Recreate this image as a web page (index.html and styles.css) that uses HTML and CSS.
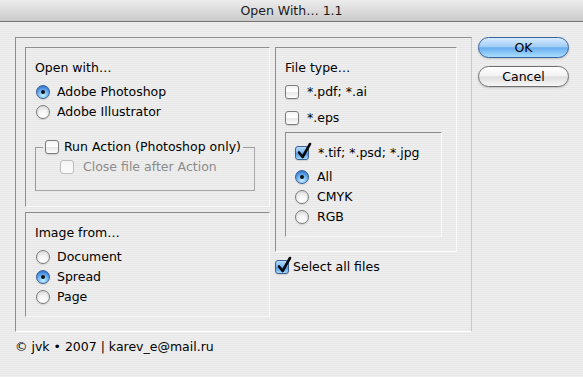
FILE: index.html
```html
<!DOCTYPE html>
<html>
<head>
<meta charset="utf-8">
<title>Open With… 1.1</title>
<link rel="stylesheet" href="styles.css">
</head>
<body>
<div class="titlebar">Open With… 1.1</div>
<div class="main">
  <div class="frame">
    <div class="col-left">
      <div class="box box-open">
        <div class="label">Open with…</div>
        <div class="opt opt-left"><span class="radio on"></span>Adobe Photoshop</div>
        <div class="opt opt-left"><span class="radio"></span>Adobe Illustrator</div>
        <fieldset class="action">
          <legend class="action-legend"><span class="check check-legend"></span>Run Action (Photoshop only)</legend>
          <div class="opt opt-close disabled"><span class="check dis"></span>Close file after Action</div>
        </fieldset>
      </div>
      <div class="box box-image">
        <div class="label">Image from…</div>
        <div class="opt opt-left"><span class="radio"></span>Document</div>
        <div class="opt opt-left"><span class="radio on"></span>Spread</div>
        <div class="opt opt-left"><span class="radio"></span>Page</div>
      </div>
    </div>
    <div class="col-right">
      <div class="box box-file">
        <div class="label">File type…</div>
        <div class="opt opt-file"><span class="check"></span>*.pdf; *.ai</div>
        <div class="opt opt-file opt-eps"><span class="check"></span>*.eps</div>
        <div class="subbox">
          <div class="opt opt-sub"><span class="check on"><svg class="tick" viewBox="0 0 16 18"><path d="M3 10.5 L6.6 15 L14 2" /></svg></span>*.tif; *.psd; *.jpg</div>
          <div class="opt opt-sub opt-first"><span class="radio on"></span>All</div>
          <div class="opt opt-sub"><span class="radio"></span>CMYK</div>
          <div class="opt opt-sub"><span class="radio"></span>RGB</div>
        </div>
      </div>
      <div class="opt opt-all"><span class="check on"><svg class="tick" viewBox="0 0 16 18"><path d="M3 10.5 L6.6 15 L14 2" /></svg></span>Select all files</div>
    </div>
  </div>
  <div class="buttons">
    <div class="btn btn-default">OK</div>
    <div class="btn">Cancel</div>
  </div>
</div>
<div class="footer">© jvk • 2007 | karev_e@mail.ru</div>
</body>
</html>
```
FILE: styles.css
```css
html, body {
  margin: 0;
  padding: 0;
}
body {
  width: 583px;
  height: 377px;
  overflow: hidden;
  font-family: "DejaVu Sans", "Liberation Sans", sans-serif;
  font-size: 12.5px;
  color: #000;
  background: repeating-linear-gradient(to bottom, #efefef 0, #efefef 1px, #e7e7e7 1px, #e7e7e7 2px);
}
.titlebar {
  height: 21px;
  line-height: 22px;
  text-align: center;
  color: #1a1a1a;
  background: linear-gradient(to bottom, #ececec 0%, #dcdcdc 50%, #cbcbcb 100%);
  border-bottom: 1px solid #727272;
}
.main {
  display: flex;
  align-items: flex-start;
  padding: 15px 0 0 15px;
}
.frame {
  display: flex;
  gap: 5px;
  box-sizing: border-box;
  width: 457px;
  height: 295px;
  padding: 9px 14px 14px 9px;
  border-top: 1px solid #8e8e8e;
  border-left: 1px solid #8e8e8e;
  border-right: 1px solid #c8c8c8;
  border-bottom: 1px solid #fdfdfd;
}
.col-left {
  display: flex;
  flex-direction: column;
  gap: 5px;
  width: 245px;
}
.col-right {
  display: flex;
  flex-direction: column;
  width: 182px;
}
.box {
  box-sizing: border-box;
  padding: 10px 0 0 9px;
  border-top: 1px solid #8e8e8e;
  border-left: 1px solid #8e8e8e;
  border-right: 1px solid #fbfbfb;
  border-bottom: 1px solid #fbfbfb;
}
.box-open { height: 160px; }
.box-image { height: 105px; }
.box-file { height: 205px; }
.label {
  height: 20px;
  line-height: 20px;
  margin-bottom: 4px;
}
.opt {
  display: flex;
  align-items: center;
  height: 20px;
  line-height: 20px;
  white-space: nowrap;
}
.opt-left .radio { margin: 0 7px 0 1px; }
.opt-file .check { margin-right: 8px; }
.opt-eps { margin-top: 6px; }
.opt-sub .check { margin-right: 9px; }
.opt-sub .radio { margin-right: 8px; }
.opt-first { margin-top: 4px; }
.opt-all { margin-top: 5px; }
.opt-all .check { margin-right: 4px; }

.action {
  margin: 15px 0 0 0;
  width: 220px;
  box-sizing: border-box;
  padding: 0 0 13px 7px;
  border: 1px solid #9a9a9a;
  border-right-color: #a8a8a8;
  border-bottom-color: #a8a8a8;
  min-width: 0;
}
.action-legend {
  display: flex;
  align-items: center;
  height: 20px;
  line-height: 20px;
  padding: 0 2px 0 2px;
  white-space: nowrap;
}
.check-legend { margin-right: 5px; }
.opt-close { padding-left: 17px; }
.opt-close .check { margin-right: 9px; }
.disabled { color: #8c8c8c; }

.subbox {
  box-sizing: border-box;
  width: 157px;
  height: 105px;
  margin-top: 4px;
  padding: 10px 0 0 9px;
  border-top: 1px solid #8e8e8e;
  border-left: 1px solid #8e8e8e;
  border-right: 1px solid #fbfbfb;
  border-bottom: 1px solid #fbfbfb;
}

.radio {
  position: relative;
  flex: none;
  box-sizing: border-box;
  width: 14px;
  height: 14px;
  border-radius: 50%;
  border: 1px solid #7c7c7c;
  background: radial-gradient(circle at 50% 75%, #ffffff 0%, #f4f4f4 40%, #cfcfcf 100%);
  box-shadow: 0 1px 1px rgba(0,0,0,0.12);
}
.radio.on {
  border-color: #3c5f94;
  background: radial-gradient(circle at 50% 78%, #c8ecff 0%, #79bdf7 40%, #3d82d8 75%, #2f66b8 100%);
}
.radio.on::after {
  content: "";
  position: absolute;
  left: 4px;
  top: 4px;
  width: 4px;
  height: 4px;
  border-radius: 50%;
  background: #111;
}
.check {
  position: relative;
  flex: none;
  box-sizing: border-box;
  width: 14px;
  height: 14px;
  border-radius: 3px;
  border: 1px solid #7c7c7c;
  background: linear-gradient(to bottom, #f3f3f3 0%, #ffffff 45%, #e8e8e8 55%, #fdfdfd 100%);
  box-shadow: 0 1px 1px rgba(0,0,0,0.12);
}
.check.on {
  border-color: #3c5f94;
  background: linear-gradient(to bottom, #b6dcfb 0%, #7cbaf2 45%, #4f98e6 55%, #a2dafd 100%);
}
.check.dis {
  border-color: #bdbdbd;
  background: linear-gradient(to bottom, #f4f4f4, #fbfbfb);
  box-shadow: none;
}
.tick {
  position: absolute;
  left: 0;
  top: -5px;
  width: 16px;
  height: 18px;
  overflow: visible;
}
.tick path {
  fill: none;
  stroke: #0a0a0a;
  stroke-width: 2.6;
  stroke-linecap: round;
  stroke-linejoin: round;
}

.buttons {
  display: flex;
  flex-direction: column;
  gap: 8px;
  margin-left: 6px;
}
.btn {
  box-sizing: border-box;
  width: 91px;
  height: 21px;
  line-height: 19px;
  text-align: center;
  font-size: 12.5px;
  border-radius: 11px;
  border: 1px solid #6f6f6f;
  background: linear-gradient(to bottom, #ffffff 0%, #f3f3f3 45%, #dedede 52%, #f7f7f7 100%);
  box-shadow: 0 1px 2px rgba(0,0,0,0.18);
}
.btn-default {
  border-color: #36609e;
  background: linear-gradient(to bottom, #d7ecff 0%, #a2cdf5 45%, #6aaeef 52%, #a8defe 100%);
}
.footer {
  padding: 5px 0 0 15px;
  height: 20px;
  line-height: 20px;
}
```
